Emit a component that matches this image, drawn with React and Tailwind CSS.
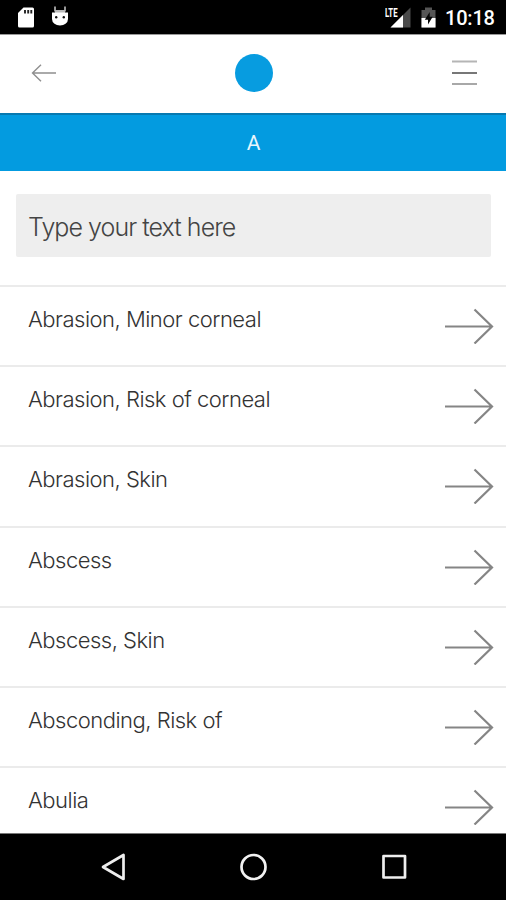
import React, { useState } from 'react';

const ITEMS = [
    'Abrasion, Minor corneal',
    'Abrasion, Risk of corneal',
    'Abrasion, Skin',
    'Abscess',
    'Abscess, Skin',
    'Absconding, Risk of',
    'Abulia',
];

const StatusBar = () => (
    <div className="flex h-[34px] shrink-0 items-center justify-between bg-black pl-[17px] pr-[10px]">
        <div className="flex h-full items-start gap-[16px] pt-[7px]">
            <svg width="18" height="21" viewBox="0 0 18 21">
                <path d="M6.5 0.5H15.5Q17 0.5 17 2V19Q17 20.5 15.5 20.5H2.5Q1 20.5 1 19V6Z" fill="#fff" />
                <path d="M8 3v3.4M11.2 3v3.4M14.3 3v3.4" stroke="#222" strokeWidth="1.9" />
            </svg>
            <svg width="18" height="21" viewBox="0 0 18 21" className="-mt-px">
                <path d="M4 0.5v5M14 0.5v5" stroke="#ccc" strokeWidth="1.5" />
                <rect x="4" y="4" width="10" height="3" fill="#bbb" />
                <path d="M1 6.5H17V13Q17 16 14.5 17.8Q12.5 19.5 9 19.5T3.5 17.8Q1 16 1 13Z" fill="#fff" />
                <circle cx="5.2" cy="11.3" r="1.2" fill="#111" />
                <circle cx="12.8" cy="11.3" r="1.2" fill="#111" />
            </svg>
        </div>
        <div className="flex h-full items-start">
            <div className="relative mt-[7px] h-[21px] w-[26px]">
                <svg width="26" height="21" viewBox="0 0 26 21">
                    <path d="M24.5 0.5V20.5H4.5Z" fill="#4b4b4b" />
                    <path d="M17 8V20.5H4.5Z" fill="#fff" />
                </svg>
                <span className="absolute -left-px -top-px origin-left scale-x-[0.6] text-[13px] font-bold leading-[13px] text-white font-[Roboto,sans-serif]">LTE</span>
            </div>
            <svg width="15" height="21" viewBox="0 0 15 21" className="ml-[9px] mt-[7px]">
                <path d="M4 0.5H11V3H14.5V20.5H0.5V3H4Z" fill="#555" />
                <path d="M0.5 11H14.5V20.5H0.5Z" fill="#fff" />
                <path d="M8.7 5L3.8 12.8H7V17.5L11.7 9.7H8.7Z" fill="#050505" />
            </svg>
            <span className="ml-[9px] mt-[6px] w-[51px] whitespace-nowrap text-[20px] font-medium leading-[24px] tracking-[-0.2px] text-white font-[Roboto,sans-serif]">10:18</span>
        </div>
    </div>
);

const Header = () => (
    <header className="grid h-[79px] shrink-0 grid-cols-3 items-center border-t border-[#999] bg-white pb-[2px] pl-[31px] pr-[29px]">
        <button aria-label="Back">
            <svg width="26" height="18" viewBox="0 0 26 18" fill="none" stroke="#8f8f8f" strokeWidth="1.4">
                <path d="M25 9H1.5M10 0.7L1.5 9L10 17.3" />
            </svg>
        </button>
        <div className="size-[37.5px] justify-self-center rounded-full bg-[#079ce0]" />
        <button aria-label="Menu" className="justify-self-end">
            <svg width="25" height="26" viewBox="0 0 25 26" strokeWidth="2">
                <path d="M0 1.5H25" stroke="#b5b5b5" />
                <path d="M0 13H25" stroke="#777" />
                <path d="M0 24H25" stroke="#a8a8a8" />
            </svg>
        </button>
    </header>
);

const Row = ({ name }) => (
    <li className="flex h-[80.2px] shrink-0 items-start justify-between border-t-2 border-[#ebebeb] pl-[28px] pr-[12px]">
        <span className="mt-[17px] whitespace-nowrap text-[22px] font-light leading-[30px] tracking-[-0.5px] text-[#333]">{name}</span>
        <svg width="50" height="36" viewBox="0 0 50 36" className="mt-[21px]" fill="none" stroke="#858585" strokeWidth="2.2">
            <path d="M1 18.5H48M30.5 1.5L48 18.5L30.5 35.5" />
        </svg>
    </li>
);

const NavBar = () => (
    <nav className="flex h-[67px] shrink-0 items-center justify-between border-t border-[#777] bg-black pl-[100px] pr-[99px]">
        <svg width="26" height="28" viewBox="0 0 26 28" fill="none" stroke="#eee" strokeWidth="2.7" strokeLinejoin="round">
            <path d="M23.5 2V26L3 14Z" />
        </svg>
        <svg width="28" height="28" viewBox="0 0 28 28" fill="none" stroke="#f2f2f2" strokeWidth="2.7">
            <circle cx="13.5" cy="14" r="12" />
        </svg>
        <svg width="26" height="26" viewBox="0 0 26 26" fill="none" stroke="#eee" strokeWidth="2.7" strokeLinejoin="round">
            <rect x="2.5" y="2" width="21.5" height="21.5" />
        </svg>
    </nav>
);

const App = () => {
    const [query, setQuery] = useState('');

    const filteredItems = ITEMS.filter(item => item.toLowerCase().includes(query.toLowerCase()));

    return (
        <div className="flex h-[900px] w-[506px] flex-col overflow-hidden bg-white font-[Inter,sans-serif]">
            <StatusBar />
            <Header />
            <div className="flex h-[58px] shrink-0 items-center justify-center border-t-2 border-[#0879b0] bg-[#039be0] pl-px pt-[2px] text-[21px] text-[#e8f6fd] font-[Roboto,sans-serif]">
                A
            </div>
            <div className="h-[114px] shrink-0 pl-[16px] pr-[15px] pt-[23px]">
                <input
                    value={query}
                    onChange={(e) => setQuery(e.target.value)}
                    placeholder="Type your text here"
                    className="h-[63px] w-full rounded-[2px] bg-[#eee] px-[12px] pb-px pt-[4px] text-[25px] font-light tracking-[-0.95px] text-[#333] outline-none placeholder:text-[#444]"
                />
            </div>
            <ul className="flex min-h-0 flex-1 flex-col overflow-hidden">
                {filteredItems.map(item => (
                    <Row key={item} name={item} />
                ))}
            </ul>
            <NavBar />
        </div>
    );
};

export default App;
